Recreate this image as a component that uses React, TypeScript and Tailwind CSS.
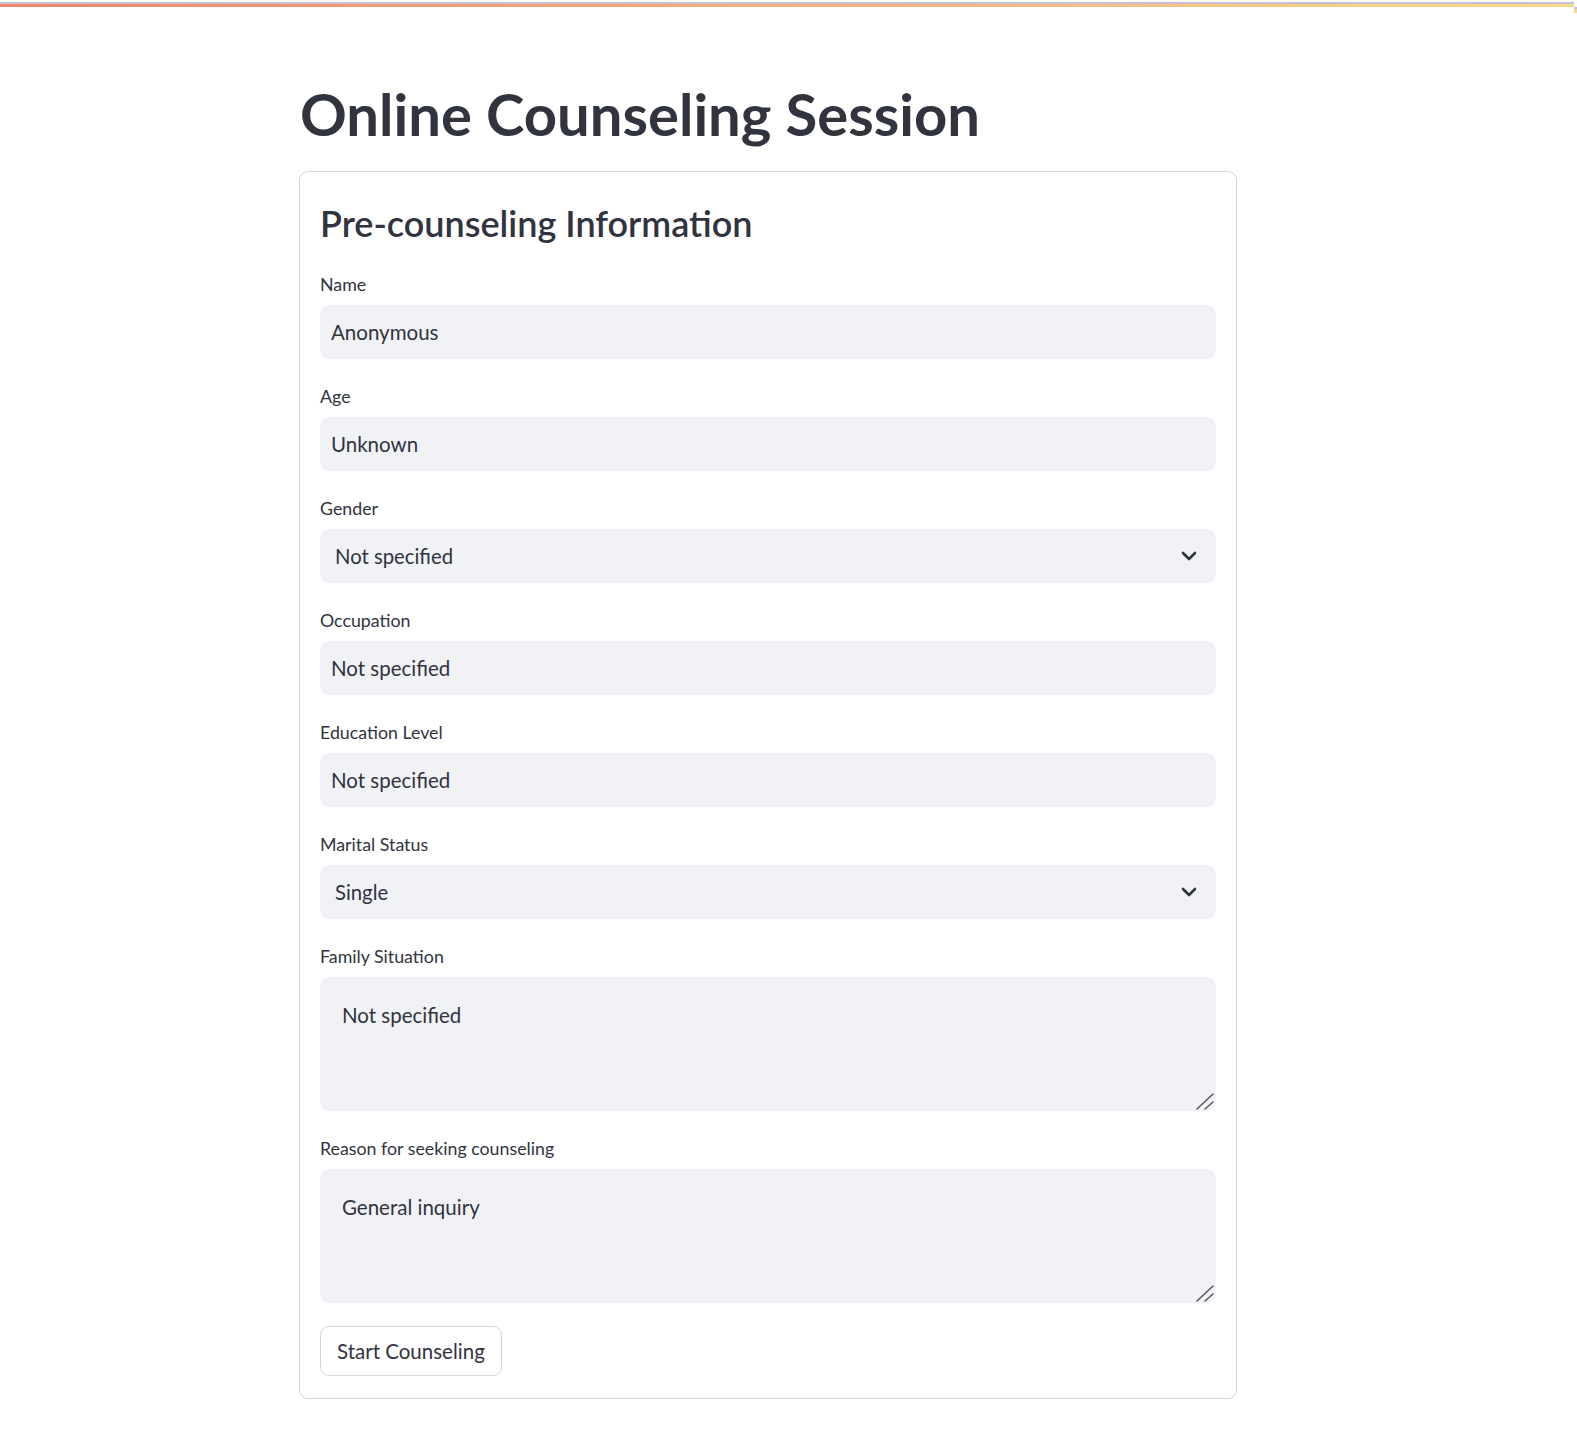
import React from "react";

const font = { fontFamily: "Lato, 'Noto Sans', sans-serif" };

function Label({ children }: { children: React.ReactNode }) {
  return (
    <div className="h-[22px] mb-[10px] text-[17.8px] leading-[22px] text-[#31333f]">{children}</div>
  );
}

function TextInput({ label, value }: { label: string; value: string }) {
  return (
    <div>
      <Label>{label}</Label>
      <input
        readOnly
        defaultValue={value}
        style={font}
        className="block w-full h-[54px] rounded-[9px] bg-[#f0f2f6] pl-[11px] text-[20.5px] text-[#31333f] outline-none"
      />
    </div>
  );
}

function SelectBox({ label, value }: { label: string; value: string }) {
  return (
    <div>
      <Label>{label}</Label>
      <div className="flex h-[54px] w-full items-center justify-between rounded-[9px] bg-[#f0f2f6] pl-[15px] pr-[19px] text-[20.3px] text-[#31333f]">
        <span>{value}</span>
        <svg width="16" height="10" viewBox="0 0 16 10" fill="none">
          <path d="M2 2 L8 8 L14 2" stroke="#31333f" strokeWidth="2.6" strokeLinecap="round" strokeLinejoin="round" />
        </svg>
      </div>
    </div>
  );
}

function TextArea({ label, value }: { label: string; value: string }) {
  return (
    <div>
      <Label>{label}</Label>
      <div className="relative">
        <textarea
          readOnly
          defaultValue={value}
          style={font}
          className="block w-full h-[134px] resize-none rounded-[9px] bg-[#f0f2f6] px-[22px] pt-[22px] text-[20.5px] leading-[32px] text-[#31333f] outline-none"
        />
        <svg
          className="pointer-events-none absolute right-0 bottom-0"
          width="22"
          height="20"
          viewBox="0 0 22 20"
          fill="none"
        >
          <path d="M3 18 L19 3" stroke="#5c5c5c" strokeWidth="1.6" strokeLinecap="round" />
          <path d="M11 18 L19 11" stroke="#5c5c5c" strokeWidth="1.6" strokeLinecap="round" />
        </svg>
      </div>
    </div>
  );
}

export default function App() {
  return (
    <div className="min-h-screen bg-white text-[#31333f]" style={font}>
      <div className="flex h-[13px] w-full">
        <div className="flex-1">
          <div className="h-[2px]" />
          <div className="h-[2px] bg-[#c6c0da]" />
          <div className="h-[3px] bg-[linear-gradient(90deg,#ee866a,#f8d987)]" />
        </div>
        <div className="w-[3px]">
          <div className="h-[7px]" />
          <div className="h-[2px] bg-[#c6c0da]" />
          <div className="h-[4px] bg-[#f8d987]" />
        </div>
      </div>

      <div className="pl-[299px] pb-[46px]">
        <div className="w-[938px]">
          <h1 className="pt-[66px] pb-[22px] text-[58px] leading-[70px] font-bold text-[#31333f] pl-[1px]">
            Online Counseling Session
          </h1>

          <div className="rounded-[9px] border border-[#d6d6d9] px-[20px] pt-[20px] pb-[22px]">
            <div className="flex flex-col gap-[26px]">
              <h3 className="pt-[11px] pb-[4px] text-[36px] leading-[40px] font-semibold text-[#31333f]">
                Pre-counseling Information
              </h3>
              <TextInput label="Name" value="Anonymous" />
              <TextInput label="Age" value="Unknown" />
              <SelectBox label="Gender" value="Not specified" />
              <TextInput label="Occupation" value="Not specified" />
              <TextInput label="Education Level" value="Not specified" />
              <SelectBox label="Marital Status" value="Single" />
              <TextArea label="Family Situation" value="Not specified" />
              <TextArea label="Reason for seeking counseling" value="General inquiry" />
            </div>
            <button
              style={font}
              className="mt-[23px] h-[50px] rounded-[9px] border border-[#d6d6d9] bg-white px-[16px] text-[20.5px] text-[#31333f]"
            >
              Start Counseling
            </button>
          </div>
        </div>
      </div>
    </div>
  );
}
